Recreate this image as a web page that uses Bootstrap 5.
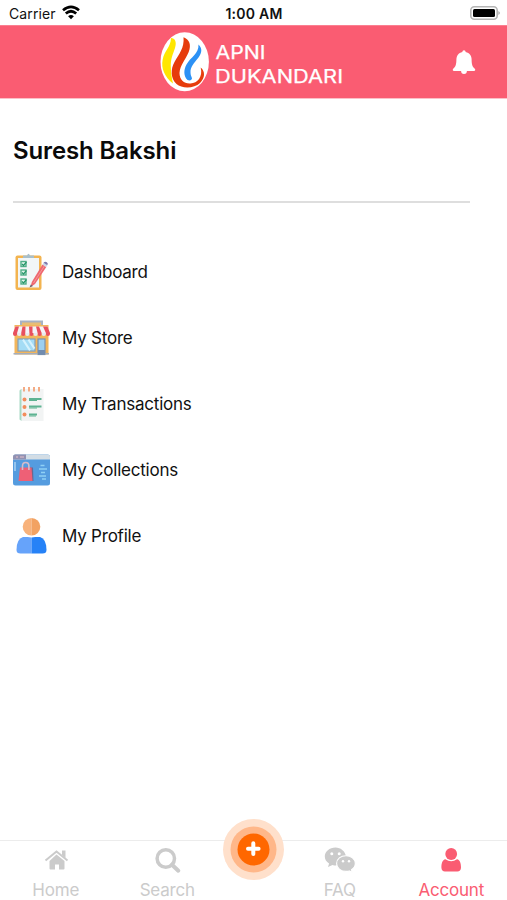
<!DOCTYPE html>
<html lang="en">
<head>
<meta charset="utf-8">
<meta name="viewport" content="width=device-width, initial-scale=1">
<title>Apni Dukandari</title>
<link href="https://cdn.jsdelivr.net/npm/bootstrap@5.3.0/dist/css/bootstrap.min.css" rel="stylesheet">
<style>
body{font-family:Inter,"Liberation Sans",sans-serif;color:#111;height:900px;overflow:hidden}
svg{display:block;flex:none;overflow:visible}
.status{height:25px;font-size:14px;line-height:27px;padding:0 6px 0 9px}
.status>*{flex:1 1 0}
.carrier{letter-spacing:.1px}
.clock{font-weight:600;font-size:14px;letter-spacing:.25px;padding-right:2px}
.topbar{height:74px;background:#fa5c72;border-bottom:1px solid #fcc0c8;border-top:1px solid #fb7f90;padding:0 31px 0 160px}
.brand-text{font-family:Inter,sans-serif;font-weight:400;fill:#fff;stroke:#fff;stroke-width:.25px}
.owner{font-size:24px;font-weight:600;line-height:30px;letter-spacing:-.12px;margin:37px 0 0;color:#0a0a0a}
.rule{height:2px;width:457px;background:#dedede;margin-top:35px}
.menu{margin-top:36px}
.entry{height:66px;gap:12px;font-size:17px;letter-spacing:-.22px;color:#111;text-decoration:none}
.entry span{padding-top:2px}
.tabs{height:60px;border-top:1px solid #ececec}
.tab{flex:1 1 0;color:#cbcbcb;font-size:17px;line-height:20px;text-decoration:none;padding-top:6px;letter-spacing:-.2px}
.tab svg{height:28px}
.tab span{margin-top:5px}
.tab.current{color:#fa5c72}
.add{width:61px;height:61px;margin-top:-22px;flex:none}
</style>
</head>
<body class="d-flex flex-column bg-white">
<div class="status d-flex">
  <div class="d-flex"><span class="carrier">Carrier</span>
    <svg class="ms-1 mt-1" width="22" height="18" viewBox="0 0 22 18" fill="none" stroke="#000" stroke-width="2.7"><path d="M3 6.300Q11 -.5 19 6.300M5.800 9.500Q11 5 16.200 9.500"/><path d="M8.100 12.200Q11 9.700 13.900 12.200L11 15.300Z" fill="#000" stroke="none"/></svg>
  </div>
  <div class="clock text-center">1:00 AM</div>
  <div class="d-flex justify-content-end">
    <svg width="31" height="25" viewBox="0 0 31 25"><rect x=".8" y="6.800" width="26.400" height="12.400" rx="3.500" fill="#fff" stroke="#b5b5b5" stroke-width="1.600"/><rect x="3" y="9" width="22" height="8" rx="1.500"/><path d="M28.400 11q3 2 0 4z" fill="#aaa"/></svg>
  </div>
</div>
<header class="topbar d-flex justify-content-between align-items-start">
  <svg width="190" height="72" viewBox="160 26 190 72">
    <ellipse cx="184.700" cy="61.800" rx="24.200" ry="29.500" fill="#fff"/>
    <path d="M171 38C175 38 177 42 175 48C173 54 170.500 59 170.800 67C171 74 172 79 173 83.500C164.500 77 161 68 162.600 60C164.500 50 170.500 48 171 38Z" fill="#ffe600"/>
    <path d="M183.500 37.300C189.500 39.500 191.500 45 188.700 52C185.500 60 180 65 179.500 73C179.500 80 184.500 84 190.500 83.500C197.500 83 203 77 200.700 67.500C205.500 71.500 205 78 200 83C194.500 88.500 182 89 176.500 84C170.500 78.500 170.500 69 174.500 62C179 54 184.500 48 183.500 37.300Z" fill="#e63c0c"/>
    <path d="M198.500 44.500C202.500 48 202 53 198.500 57.500C194 63 190.300 67 190.500 72C190.500 76 192 77 192 78.500C191.500 80.500 189.500 81 187.500 80C183.500 76 183.500 70 186.500 64.500C190.500 57 199 54 198.500 44.500Z" fill="#2c91f5"/>
    <g class="brand-text"><text x="215.500" y="59.200" font-size="18" textLength="50" lengthAdjust="spacingAndGlyphs">APNI</text><text x="215" y="82.500" font-size="18" textLength="128" lengthAdjust="spacingAndGlyphs">DUKANDARI</text></g>
  </svg>
  <svg width="24" height="26" viewBox="0 0 24 26" fill="#fff" style="margin-top:24px"><path d="M12 .3c1 0 1.600.7 1.600 1.700 4 .8 6 3.800 6 7.500 0 5.300 1 7.600 3.200 9.200.9.800.4 2.300-.8 2.300h-7.100a2.900 2.900 0 0 1-5.800 0H2c-1.200 0-1.700-1.500-.8-2.300C3.400 17.100 4.400 14.800 4.400 9.500c0-3.700 2-6.700 6-7.500C10.400 1 11 .3 12 .3Z"/></svg>
</header>
<main class="flex-grow-1" style="padding-left:13px">
  <h1 class="owner">Suresh Bakshi</h1>
  <div class="rule"></div>
  <nav class="menu d-flex flex-column">
    <a class="entry d-flex align-items-center" href="#">
      <svg width="37" height="38" viewBox="0 0 37 38"><rect x="2.500" y="2.500" width="26" height="34.500" rx="2" fill="#f3b450"/><rect x="5" y="5" width="21" height="29.500" fill="#f2f6f7"/><path d="M10 5V2.500h4Q15.500-1 17 2.500h4V5z" fill="#a8bfcb"/><g fill="#dff2e9" stroke="#51ae88" stroke-width="1.400"><rect x="8" y="8.500" width="5" height="5"/><rect x="8" y="17" width="5" height="5"/><rect x="8" y="26" width="5" height="5"/></g><path d="m9 11 1.500 1.500L13.500 9M9 19.500l1.500 1.500 3-3.500M9 28.500l1.500 1.500 3-3.500" fill="none" stroke="#26966a" stroke-width="1.200"/><path d="m17.500 34 1.300-5L29.500 11.500l3.800 2.400L22 31z" fill="#ee6870"/><path d="M20.500 30 31.500 12.800" stroke="#f69699"/><path d="m16.500 34.500 1.300-3L20 33z" fill="#6c6370"/><path d="m29.500 11.500 1-1.700 3.800 2.400-1 1.700z" fill="#c9d6e6"/><path d="m30.500 9.800q1.500-1.800 3.300-.6t.5 3z" fill="#7d79ad"/></svg>
      <span>Dashboard</span></a>
    <a class="entry d-flex align-items-center" href="#">
      <svg width="37" height="36" viewBox="0 0 37 36"><rect x="8" y="1.500" width="21" height="6" fill="#e9bd73" stroke="#a7b2c3" stroke-width="2"/><path d="M1.500 5H35.500V34.500H1.500z" fill="#f2b65c"/><path d="M2.500 6.500H34.500L37 13H0z" fill="#f4f3f7"/><g fill="#e8505f"><path d="M2.500 6.500H6L4.100 13H0zM9.500 6.500h3l-.2 6.500H8.200zM16 6.500h3.500v6.500h-3.100zM23 6.500h3l2.700 6.500h-4.100zM30 6.500h4.500L37 13h-4.100z"/><path d="M0 13h4.100v1a2 2 0 0 1-4.100 0zM8.200 13h4.100v1a2 2 0 0 1-4.100 0zM16.400 13h4.100v1a2 2 0 0 1-4.100 0zM24.600 13h4.100v1a2 2 0 0 1-4.100 0zM32.900 13H37v1a2 2 0 0 1-4.100 0z"/></g><path d="M4.100 13h4.100v1a2 2 0 0 1-4.100 0zM12.300 13h4.100v1a2 2 0 0 1-4.100 0zM20.500 13h4.100v1a2 2 0 0 1-4.100 0zM28.700 13h4.200v1a2 2 0 0 1-4.200 0z" fill="#e9e9f0"/><rect x="5" y="19" width="17" height="12" fill="#a4dcf5" stroke="#859fb7" stroke-width="1.200"/><path d="m10 19.600 7 10.800M15.500 19.600l6 9" stroke="#d5f2fd" stroke-width="2"/><rect x="25" y="19" width="7" height="15.500" fill="#9ccff0" stroke="#7891b0" stroke-width="1.200"/><path d="M25 30h7v4.500h-7z" fill="#728cae"/><path d="M.5 33.700h24M32.500 33.700H36" stroke="#a4adbb" stroke-width="1.600"/></svg>
      <span>My Store</span></a>
    <a class="entry d-flex align-items-center" href="#">
      <svg width="37" height="36" viewBox="0 0 37 36"><path d="M7 3h23.500v32H8.500z" fill="#f2f4f4"/><path d="M6.500 4.500V33.500l2 1.500V3z" fill="#a9d9c5"/><path d="M11 1v4.500M16 1v4.500M21 1v4.500M26 1v4.500" stroke="#f3a378" stroke-width="1.800"/><g fill="#f28d5c"><circle cx="11.500" cy="13.500" r="2"/><circle cx="11.500" cy="21" r="2"/><circle cx="11.500" cy="28.500" r="2"/></g><path d="M16 13h12.500M16 20.500h12.500M16 28.500h8" stroke="#5eb392" stroke-width="2"/><path d="M16 14.500h8M16 22h8M16 30h7" stroke="#5eb392" stroke-width="1.200"/></svg>
      <span>My Transactions</span></a>
    <a class="entry d-flex align-items-center" href="#">
      <svg width="37" height="32" viewBox="0 0 37 32"><rect width="37" height="31" rx="2.500" y=".5" fill="#559cdf"/><path d="M2.500.5H34.500Q37 .5 37 3v2.500H0V3Q0 .5 2.500.5z" fill="#d3dde5"/><path d="M2.500.5H13V5.500H0V3Q0 .5 2.500.5z" fill="#9292b2"/><path d="M3 3h2M7 3h4" stroke="#e5bfc9"/><path d="M2 8v9" stroke="#b5daf6" stroke-width="1.300"/><path d="M17 13.500h3L20.500 27H17z" fill="#6b6790"/><path d="M7 13.500h11.500L19.500 27H5.500z" fill="#ee6076"/><path d="M9.500 16v-4q0-3.500 3.200-3.500t3.200 3.500v4" fill="none" stroke="#d7bccb" stroke-width="1.600"/><path d="M27.500 11.500h4M26 15h8M28 18.500h4M26 22h7M29 25h4" stroke="#8fd0f5" stroke-width="1.400"/></svg>
      <span>My Collections</span></a>
    <a class="entry d-flex align-items-center" href="#">
      <svg width="37" height="36" viewBox="0 0 37 36"><path d="M18.500 19H10Q3.500 21 3.500 32q0 3.500 4 3.500h11z" fill="#66a3fa"/><path d="M18.500 19H27q6.500 2 6.500 13 0 3.500-4 3.500h-11z" fill="#2682f7"/><circle cx="18.500" cy="9" r="10.500" fill="#fff"/><path d="M18.500 0a8.800 8.800 0 0 0 0 17.600z" fill="#f8b27b"/><path d="M18.500 0a8.800 8.800 0 0 1 0 17.600z" fill="#f2a262"/></svg>
      <span>My Profile</span></a>
  </nav>
</main>
<footer class="tabs d-flex">
  <a class="tab d-flex flex-column align-items-center" href="#"><svg width="26" height="28" viewBox="0 0 26 28" fill="currentColor"><path d="M13.500 7.500 21.500 14v7.500q0 1-1 1h-4.500v-5h-4v5H7.500q-1 0-1-1V14z"/><path d="m2.500 13.500 11-9 11 9" fill="none" stroke="currentColor" stroke-width="2"/><path d="M19 3.500H22.500V11l-3.500-3z"/></svg><span>Home</span></a>
  <a class="tab d-flex flex-column align-items-center" href="#"><svg width="26" height="28" viewBox="0 0 26 28" fill="none" stroke="currentColor"><circle cx="11.800" cy="11.500" r="8.700" stroke-width="3.500"/><path d="m18 17.700 6.300 6" stroke-width="4" stroke-linecap="round"/></svg><span>Search</span></a>
  <a class="add" href="#" aria-label="Add"><svg width="61" height="61" viewBox="0 0 61 61"><circle cx="30.500" cy="30.500" r="30.500" fill="#ffe0cb"/><circle cx="30.500" cy="30.500" r="23" fill="#ffb789"/><circle cx="30.500" cy="30.500" r="16" fill="#ff6700"/><path d="M30.300 24.300v10.800M25 29.700h10.600" stroke="#fff" stroke-width="4" stroke-linecap="round"/></svg></a>
  <a class="tab d-flex flex-column align-items-center" href="#"><svg width="32" height="28" viewBox="0 0 32 28" fill="currentColor"><path d="M11.500 .5C5.500 .5 .8 4.500 .8 9.500c0 2.900 1.500 5.300 4.300 7L4 20l4.500-2q1.700.5 3.500.5L22 9C20.800 4 16.600 .5 11.500 .5z"/><path d="M22 8.700c-5.300 0-9.400 3.400-9.400 7.800s4.100 7.900 9.400 7.900q1.900 0 3.300-.5l3 1.700-.8-2.800c2.200-1.500 3.800-3.700 3.800-6.300 0-4.400-4.300-7.800-9.300-7.800z" stroke="#fff" stroke-width="1.100"/><g fill="#fff"><circle cx="7.800" cy="6.700" r="1.500"/><circle cx="15.200" cy="6.700" r="1.500"/><circle cx="19" cy="14.200" r="1.200"/><circle cx="25" cy="14.200" r="1.200"/></g></svg><span>FAQ</span></a>
  <a class="tab current d-flex flex-column align-items-center" href="#"><svg width="22" height="28" viewBox="0 0 22 28" fill="currentColor"><circle cx="11.200" cy="7" r="5.900"/><path d="M5.400 12.200q5.800 4.200 11.600 0c3 .7 4 3.800 4 8.300 0 2.500-1.500 4-3.600 4H5c-2.100 0-3.600-1.500-3.600-4 0-4.500 1-7.600 4-8.300z"/></svg><span>Account</span></a>
</footer>
<script src="https://cdn.jsdelivr.net/npm/bootstrap@5.3.0/dist/js/bootstrap.bundle.min.js"></script>
</body>
</html>
